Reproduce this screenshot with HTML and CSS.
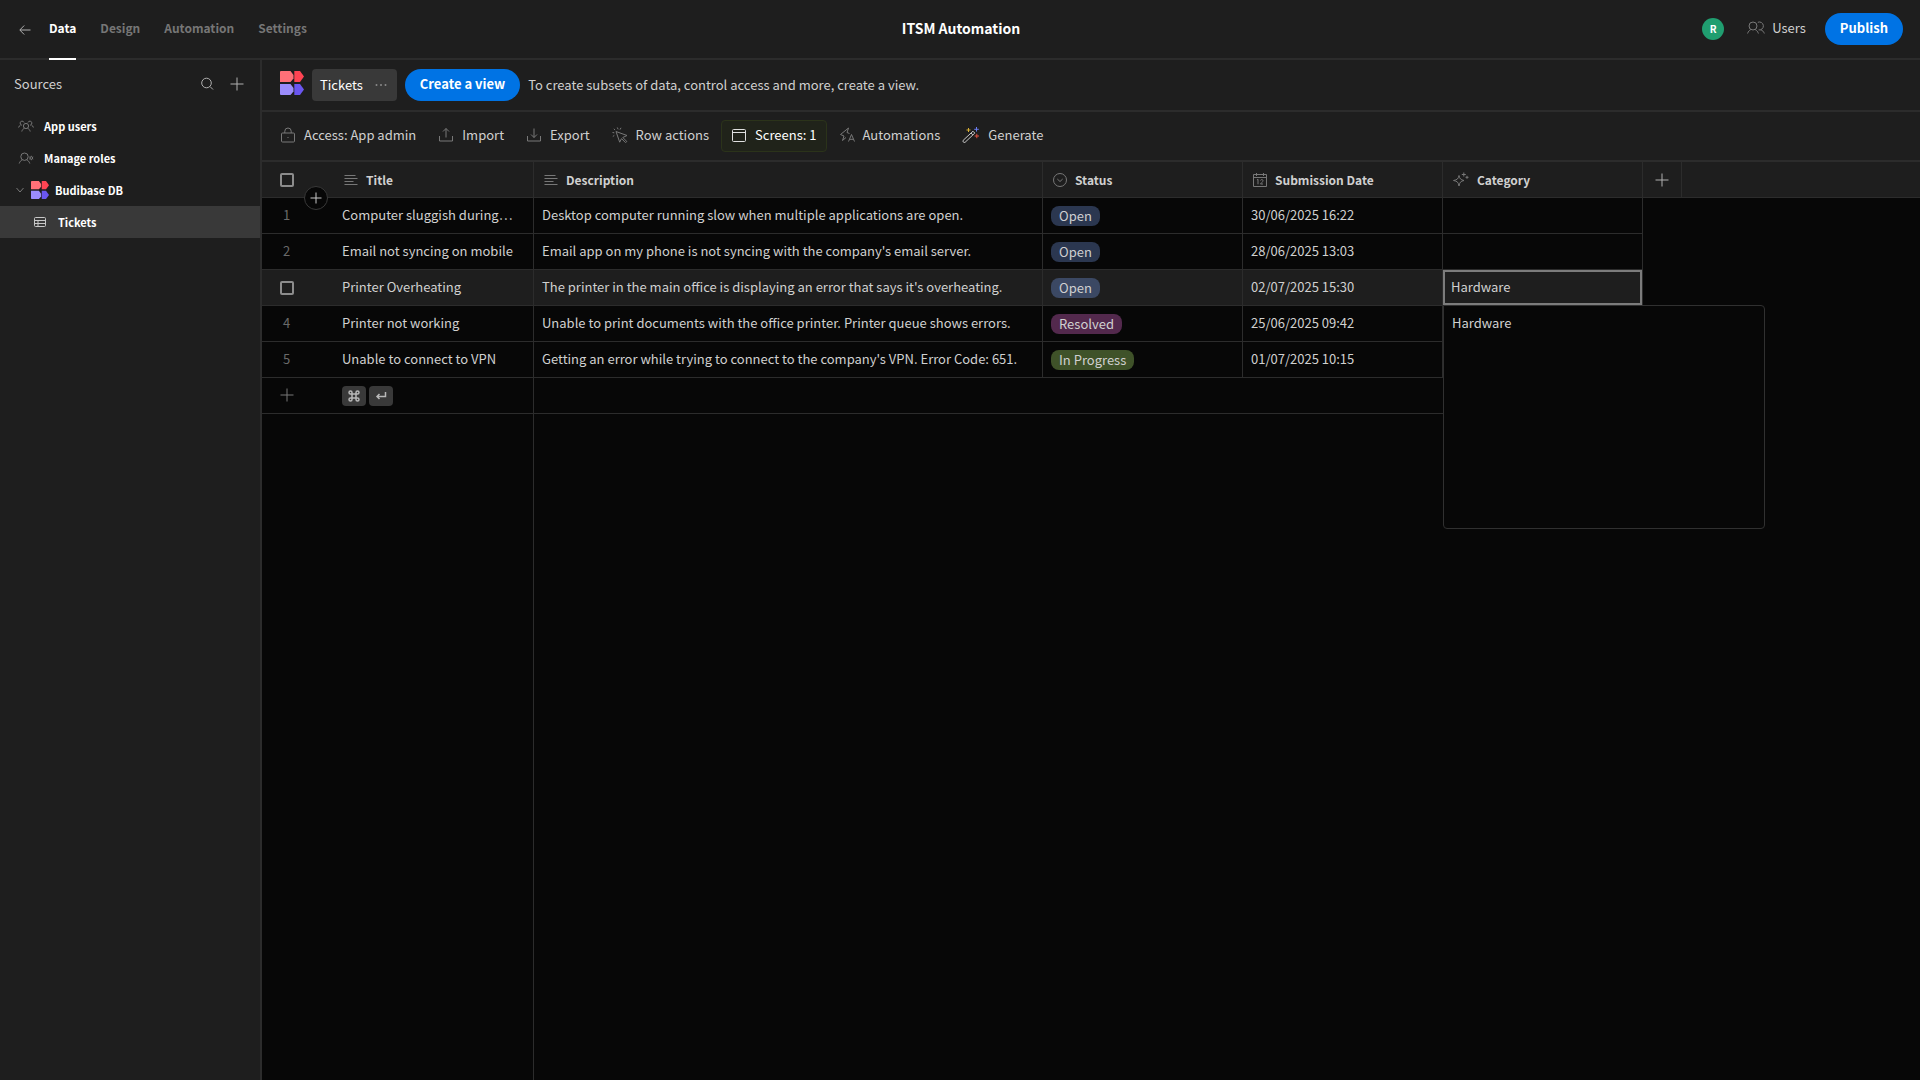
FILE: index.html
```html
<!DOCTYPE html>
<html lang="en">
<head>
<meta charset="utf-8">
<title>ITSM Automation</title>
<link rel="stylesheet" href="styles.css">
</head>
<body>
<svg class="defs" aria-hidden="true">
  <symbol id="logo" viewBox="0 0 24 24">
    <path fill="#ff7078" d="M1 0h9.500l3 4v3.500L10.500 11H0V1a1 1 0 0 1 1-1z"/>
    <path fill="#ff4453" d="M14.300 0H20l4 5.500L20 11h-5.700z"/>
    <path fill="#9b8cfb" d="M0 13h10.500l3 4v3.500L10.500 24H1a1 1 0 0 1-1-1z"/>
    <path fill="#6a56f0" d="M14.300 13H20l4 5.500L20 24h-5.700z"/>
  </symbol>
  <symbol id="plus" viewBox="0 0 14 14"><path d="M7 .5v13M.5 7h13"/></symbol>
  <symbol id="lines" viewBox="0 0 14 14"><path d="M.5 2.500h11M.5 5.500h13M.5 8.500h9M.5 11.500h13"/></symbol>
</svg>
<div class="app">
  <header class="topbar">
    <nav class="tabs">
      <a class="back" href="#" aria-label="Back"><svg class="icon" width="12" height="12" viewBox="0 0 12 12"><path d="M11.500 6H1M5.200 1.500L.8 6l4.400 4.500"/></svg></a>
      <a class="tab tab-active" href="#">Data</a>
      <a class="tab" href="#">Design</a>
      <a class="tab" href="#">Automation</a>
      <a class="tab" href="#">Settings</a>
    </nav>
    <h1 class="app-title">ITSM Automation</h1>
    <div class="top-actions">
      <span class="avatar">R</span>
      <button class="users" type="button"><svg class="icon" width="18" height="14" viewBox="0 0 18 14"><circle cx="6" cy="5" r="4"/><path d="M.6 12.500c.6-2 1.700-3.200 3.200-3.900M11.400 12.500c-.6-2-1.700-3.200-3.200-3.900M10.800 1.300a4 4 0 1 1 .8 7.600M13.500 8.800c2 .5 3.200 1.800 3.800 3.700"/></svg>Users</button>
      <button class="cta" type="button">Publish</button>
    </div>
  </header>
  <div class="workspace">
    <aside class="sidebar">
      <div class="sources">
        <h2 class="sources-title">Sources</h2>
        <button class="icon-button" type="button" aria-label="Search"><svg class="icon bright" width="14" height="14" viewBox="0 0 14 14"><circle cx="6.500" cy="6" r="4.800"/><path d="M10 9.500l3 3"/></svg></button>
        <button class="icon-button" type="button" aria-label="Add source"><svg class="icon bright" width="14" height="14"><use href="#plus"/></svg></button>
      </div>
      <nav class="tree">
        <a class="item" href="#"><svg class="icon" width="16" height="14" viewBox="0 0 16 14"><circle cx="8" cy="7" r="2.600"/><path d="M3.800 12.500c.4-1.700 1.400-2.700 2.600-3.200M12.200 12.500c-.4-1.700-1.400-2.700-2.600-3.200M6 3.500a2 2 0 1 0-3.600 1.700c.4.6 1 .9 1.600 1M.6 8.500c.4-1.300 1-2 2-2.500M10 3.500a2 2 0 1 1 3.600 1.700c-.4.6-1 .9-1.600 1M15.400 8.500c-.4-1.300-1-2-2-2.500"/></svg>App users</a>
        <a class="item" href="#"><svg class="icon" width="16" height="14" viewBox="0 0 16 14"><circle cx="6.500" cy="5.700" r="3.700"/><path d="M1.200 12.500c.6-1.900 1.600-3 3-3.500M11.800 12.500c-.6-1.900-1.600-3-3-3.500"/><circle cx="13.300" cy="7" r="1.300"/><path d="M13.300 4.800v.9M13.300 8.300v.9M11.400 5.900l.7.400M15.200 5.900l-.7.400M11.400 8.100l.7-.4M15.200 8.100l-.7-.4"/></svg>Manage roles</a>
        <a class="item item-source" href="#"><svg class="icon" width="10" height="8" viewBox="0 0 10 8"><path d="M1.500 2l3.500 4 3.500-4"/></svg><svg width="18" height="18"><use href="#logo"/></svg>Budibase DB</a>
        <a class="item item-active" href="#"><svg class="icon" width="12" height="12" viewBox="0 0 12 12"><rect x=".5" y="1.500" width="11" height="9" rx="1"/><path d="M.5 4.500h11M.5 7.500h11M4 4.500v6"/></svg>Tickets</a>
      </nav>
    </aside>
    <main class="main">
      <div class="viewbar">
        <svg class="view-logo" width="24" height="24"><use href="#logo"/></svg>
        <button class="chip" type="button">Tickets<svg width="12" height="4" viewBox="0 0 12 4" fill="#8a8a8a"><circle cx="1.500" cy="2" r="1"/><circle cx="6" cy="2" r="1"/><circle cx="10.500" cy="2" r="1"/></svg></button>
        <button class="cta" type="button">Create a view</button>
        <span class="hint">To create subsets of data, control access and more, create a view.</span>
      </div>
      <div class="toolbar">
        <button class="tool" type="button"><svg class="icon" width="16" height="16" viewBox="0 0 16 16"><rect x="1.500" y="6" width="13" height="9" rx="1"/><path d="M4.800 6V4.200a3.200 3.200 0 0 1 6.400 0V6M8 10v1"/></svg>Access: App admin</button>
        <button class="tool" type="button"><svg class="icon" width="16" height="16" viewBox="0 0 16 16"><path d="M1.500 9v5h13V9M8 10.500V1.500M5 4.500l3-3 3 3"/></svg>Import</button>
        <button class="tool" type="button"><svg class="icon" width="16" height="16" viewBox="0 0 16 16"><path d="M1.500 9v5h13V9M8 1.500v9M5 7.500l3 3 3-3"/></svg>Export</button>
        <button class="tool" type="button"><svg class="icon" width="16" height="16" viewBox="0 0 16 16"><path d="M4 4.500l11 4-4.200 2 4 4-1.300 1.100-4-4-1.800 3.600zM5.300.5l.8 1.800M9 .8L8 2.600M.5 5.500l1.800.3M.8 9.500l1.500-1.100M1.800 1.800l1.300 1.200"/></svg>Row actions</button>
        <button class="tool tool-active" type="button"><svg class="icon" width="16" height="16" viewBox="0 0 16 16"><rect x="1.500" y="2.500" width="13" height="12" rx="1"/><path d="M1.500 5.500h13"/></svg>Screens: 1</button>
        <button class="tool" type="button"><svg class="icon" width="16" height="16" viewBox="0 0 16 16"><path d="M7 10.500L3.500 13.500 5 9 1.500 7.500 9.500 1 8 5.500l2.500 1M9.500 14.500l3-7 3 7M10.500 12.300h4"/></svg>Automations</button>
        <button class="tool" type="button"><svg class="icon" width="18" height="16" viewBox="0 0 18 16"><path stroke="#c8c8c8" d="M1.200 13.300L11 4.200l1.800 1.900-9.700 9.200c-1.300.8-2.700-.7-1.900-2zM9 6l1.800 1.900"/><path stroke="#d9b036" d="M6.500 1v4M4.500 3h4"/><path stroke="#6b7cf0" d="M14.500 0v4.600M12.200 2.300h4.600"/><path stroke="#e0503f" d="M14.800 6.800v4.400M12.600 9H17"/></svg>Generate</button>
      </div>
      <div class="grid">
        <table class="table">
          <colgroup><col class="col-gutter"><col class="col-title"><col class="col-desc"><col class="col-std"><col class="col-std"><col class="col-std"><col class="col-add"><col></colgroup>
          <thead>
            <tr>
              <th class="gutter"><input class="check" type="checkbox" aria-label="Select all rows"><button class="insert" type="button" aria-label="Insert row"><svg class="icon" width="12" height="12"  viewBox="0 0 12 12"><path d="M6 .5v11M.5 6h11"/></svg></button></th>
              <th class="line"><span class="head"><svg class="icon" width="14" height="14"><use href="#lines"/></svg>Title</span></th>
              <th class="line"><span class="head"><svg class="icon" width="14" height="14"><use href="#lines"/></svg>Description</span></th>
              <th class="line"><span class="head"><svg class="icon" width="14" height="14" viewBox="0 0 14 14"><circle cx="7" cy="7" r="6.500"/><path d="M4.300 6L7 8.500 9.700 6"/></svg>Status</span></th>
              <th class="line"><span class="head"><svg class="icon" width="14" height="14" viewBox="0 0 14 14"><path d="M.5 1.500h13v12H.5zM.5 4.500h13M3.500 0v3M10.500 0v3M4 7l1-.7v5M7.500 7.500c.2-1.200 2.500-1.300 2.500.1 0 1.200-1.800 2.200-2.500 3.400H10"/></svg>Submission Date</span></th>
              <th class="line"><span class="head"><svg class="icon" width="16" height="16" viewBox="0 0 16 16"><path d="M6 3.500c.7 3.300 1.700 4.300 5 5-3.300.7-4.300 1.700-5 5.500-.7-3.800-1.700-4.800-5.500-5.500C4.300 7.800 5.300 6.800 6 3.500zM10.800.5v4M8.800 2.500h4M14 3.800v3M12.500 5.300h3"/></svg>Category</span></th>
              <th class="line add"><button class="icon-button" type="button" aria-label="Add column"><svg class="icon bright" width="14" height="14"><use href="#plus"/></svg></button></th>
              <th></th>
            </tr>
          </thead>
          <tbody>
            <tr><td class="gutter">1</td><td class="line">Computer sluggish during…</td><td class="line">Desktop computer running slow when multiple applications are open.</td><td class="line boxed"><span class="tag tag-open">Open</span></td><td class="line">30/06/2025 16:22</td><td class="line"></td></tr>
            <tr><td class="gutter">2</td><td class="line">Email not syncing on mobile</td><td class="line">Email app on my phone is not syncing with the company's email server.</td><td class="line boxed"><span class="tag tag-open">Open</span></td><td class="line">28/06/2025 13:03</td><td class="line"></td></tr>
            <tr class="hovered"><td class="gutter boxed"><input class="check" type="checkbox" aria-label="Select row 3"></td><td class="line">Printer Overheating</td><td class="line">The printer in the main office is displaying an error that says it's overheating.</td><td class="line boxed"><span class="tag tag-open">Open</span></td><td class="line">02/07/2025 15:30</td><td class="line selected">Hardware<textarea class="editor" aria-label="Category">Hardware</textarea></td></tr>
            <tr><td class="gutter">4</td><td class="line">Printer not working</td><td class="line">Unable to print documents with the office printer. Printer queue shows errors.</td><td class="line boxed"><span class="tag tag-resolved">Resolved</span></td><td class="line">25/06/2025 09:42</td><td class="line"></td></tr>
            <tr><td class="gutter">5</td><td class="line">Unable to connect to VPN</td><td class="line">Getting an error while trying to connect to the company's VPN. Error Code: 651.</td><td class="line boxed"><span class="tag tag-progress">In Progress</span></td><td class="line">01/07/2025 10:15</td><td class="line"></td></tr>
            <tr><td class="gutter"><button class="icon-button" type="button" aria-label="Add row"><svg class="icon" width="14" height="14"><use href="#plus"/></svg></button></td><td class="line boxed"><span class="keys"><kbd class="key"><svg width="12" height="12" viewBox="0 0 12 12"><path d="M4 4H2.500A1.500 1.500 0 1 1 4 2.500v7A1.500 1.500 0 1 1 2.500 8h7A1.500 1.500 0 1 1 8 9.500v-7A1.500 1.500 0 1 1 9.500 4H4"/></svg></kbd><kbd class="key"><svg width="12" height="12" viewBox="0 0 12 12"><path d="M10.500 2v4.500H2M4.500 4L2 6.500 4.500 9"/></svg></kbd></span></td><td colspan="4"></td></tr>
          </tbody>
        </table>
        <div class="rest"><div class="rest-sticky"></div></div>
      </div>
    </main>
  </div>
</div>
</body>
</html>
```
FILE: styles.css
```css
* { box-sizing: border-box; }

body {
  margin: 0;
  background: #070707;
  color: #d0d0d0;
  font-family: "Noto Sans CJK SC", "Source Sans 3", sans-serif;
  font-size: 13px;
  line-height: 20px;
}

button, textarea { font: inherit; color: inherit; }
button { border: 0; padding: 0; background: none; }
a { color: inherit; text-decoration: none; }
h1, h2 { margin: 0; }

.defs { position: absolute; width: 0; height: 0; }
.icon { flex: none; fill: none; stroke: #787878; stroke-width: 1; }
.bright { stroke: #b0b0b0; }
.icon-button { display: flex; }

.app { display: flex; flex-direction: column; min-height: 100vh; }

/* Top bar */
.topbar {
  display: grid;
  grid-template-columns: 1fr auto 1fr;
  align-items: center;
  height: 60px;
  padding: 0 17px 0 19px;
  background: #1e1e1e;
  border-bottom: 2px solid #2c2c2c;
}
.tabs { display: flex; gap: 24px; height: 60px; margin-bottom: -2px; }
.back { display: flex; align-items: center; margin-right: -6px; }
.back .icon { stroke: #b0b0b0; }
.tab {
  padding: 18px 0;
  border-bottom: 2px solid transparent;
  color: #767676;
  font-size: 12px;
  font-weight: 700;
}
.tab-active { color: #fff; border-color: #fff; }
.app-title { padding-bottom: 2px; font-size: 14px; font-weight: 700; color: #fff; }
.top-actions { display: flex; align-items: center; justify-content: flex-end; }
.avatar {
  width: 22px;
  margin-right: 23px;
  border-radius: 50%;
  background: #209e70;
  color: #fff;
  font-size: 10px;
  font-weight: 700;
  line-height: 22px;
  text-align: center;
}
.users { display: flex; align-items: center; gap: 7px; margin-right: 19px; padding-bottom: 2px; }
.cta {
  height: 32px;
  padding: 0 15px 2px;
  border-radius: 16px;
  background: #0073e4;
  color: #fff;
  font-weight: 700;
}

.workspace { display: flex; flex: 1; }

/* Sidebar */
.sidebar { flex: none; width: 262px; background: #1e1e1e; border-right: 2px solid #2c2c2c; }
.sources { display: flex; align-items: center; gap: 16px; padding: 14px 16px 0 14px; }
.sources-title { flex: 1; font-size: 13px; font-weight: 400; }
.tree { padding-top: 16px; }
.item {
  display: flex;
  align-items: center;
  gap: 10px;
  height: 32px;
  padding-left: 18px;
  color: #fff;
  font-size: 11px;
  font-weight: 700;
}
.item-source { gap: 6px; padding-left: 15px; }
.item-active { gap: 12px; padding-left: 34px; background: #393939; }
.item-active .icon { stroke: #c8c8c8; }

/* View bar and toolbar */
.main { display: flex; flex: 1; flex-direction: column; min-width: 0; }
.viewbar, .toolbar { display: flex; align-items: center; background: #1e1e1e; border-bottom: 2px solid #2c2c2c; }
.viewbar { gap: 8px; height: 52px; padding: 0 18px; }
.view-logo { margin-bottom: 4px; }
.chip {
  display: flex;
  align-items: center;
  gap: 12px;
  height: 32px;
  padding: 0 10px 0 8px;
  border-radius: 4px;
  background: #393939;
  color: #fff;
}
.toolbar { gap: 2px; height: 50px; padding: 0 8px; }
.tool {
  display: flex;
  align-items: center;
  gap: 8px;
  height: 32px;
  padding: 0 9px 2px;
  border: 1px solid transparent;
  border-radius: 4px;
}
.tool-active { background: #20231a; border-color: #2b331a; color: #fff; }
.tool-active .icon { stroke: #e0e0e0; }

/* Data grid */
.grid { display: flex; flex: 1; flex-direction: column; }
.table { width: 100%; table-layout: fixed; border-spacing: 0; }
.col-gutter { width: 72px; }
.col-title { width: 200px; }
.col-desc { width: 509px; }
.col-std { width: 200px; }
.col-add { width: 39px; }

th, td { height: 36px; padding: 0 8px 2px; border-bottom: 1px solid #2c2c2c; text-align: left; white-space: nowrap; }
th { padding: 0 10px; background: #1e1e1e; font-size: 12px; font-weight: 700; }
.line { border-right: 1px solid #2c2c2c; }
.gutter { position: relative; padding: 0 23px 2px 0; color: #6a6a6a; text-align: center; }
.gutter .icon-button { margin-left: 18px; }
.boxed, th.gutter { padding-bottom: 0; }
.head { display: flex; align-items: center; gap: 8px; }
.add { padding: 0 12px; }
.hovered td { background: #1e1e1e; }

.check {
  display: block;
  appearance: none;
  width: 14px;
  height: 14px;
  margin: 0 0 0 18px;
  border: 2px solid #8c8c8c;
  border-radius: 2px;
}
.insert {
  position: absolute;
  z-index: 1;
  bottom: -13px;
  right: 6px;
  display: flex;
  align-items: center;
  justify-content: center;
  width: 24px;
  height: 24px;
  border: 1px solid #393939;
  border-radius: 50%;
  background: #070707;
}
.insert .icon { stroke: #c8c8c8; }

.tag { display: inline-block; padding: 0 8px; border-radius: 8px; vertical-align: middle; }
.tag-open { background: #2b3750; }
.hovered .tag-open { background: #3b4863; }
.tag-resolved { background: #53294d; }
.tag-progress { background: #3f5229; }

.hovered .selected { position: relative; box-shadow: inset 0 0 0 2px #7c7c7c; }
.editor {
  position: absolute;
  top: 35px;
  left: 0;
  z-index: 2;
  width: 322px;
  height: 224px;
  padding: 7px 8px;
  border: 1px solid #303030;
  border-radius: 0 4px 4px 4px;
  outline: 0;
  background: #070707;
  resize: none;
}

.keys { display: flex; gap: 3px; }
.key {
  display: flex;
  align-items: center;
  justify-content: center;
  width: 24px;
  height: 20px;
  border-radius: 4px;
  background: #393939;
}
.key svg { fill: none; stroke: #b8b8b8; stroke-width: 1.500; }

.rest { display: flex; flex: 1; }
.rest-sticky { width: 272px; border-right: 1px solid #2c2c2c; }
```
